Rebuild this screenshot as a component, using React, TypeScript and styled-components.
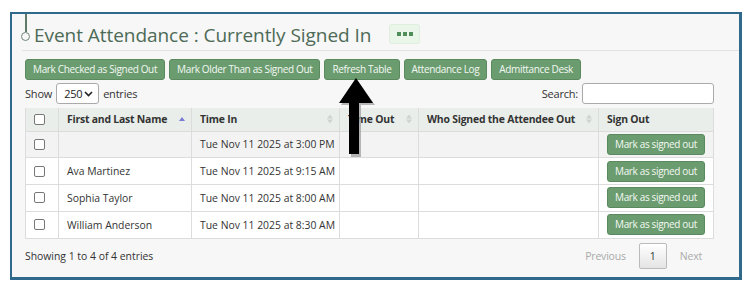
import React from 'react';
import styled, { createGlobalStyle } from 'styled-components';

const GlobalStyle = createGlobalStyle`
  body {
    margin: 0;
    background: #ffffff;
    font-family: "Open Sans", "Noto Sans", sans-serif;
  }
`;

const Page = styled.div`
  position: relative;
  width: 748px;
  height: 287px;
  padding: 12px 0 0 10px;
  box-sizing: border-box;
`;

const Panel = styled.div`
  position: relative;
  width: 732px;
  height: 268px;
  box-sizing: border-box;
  background: #f7f7f7;
  border: 2px solid #2f6a8c;
  border-right-width: 3px;
  border-bottom-width: 3px;
  padding: 0 25px 0 13px;
`;

const Header = styled.div`
  position: relative;
  display: flex;
  align-items: center;
  height: 36px;
  margin: 0 -25px 0 -3px;
  padding: 0 0 0 3px;
  border-bottom: 1px solid #e2e2e2;

  &::before {
    content: '';
    position: absolute;
    left: 3px;
    top: 0;
    width: 1.5px;
    height: 18px;
    background: #5f7a68;
  }
`;

const Node = styled.span`
  width: 7px;
  height: 7px;
  margin-left: -4px;
  margin-top: 8px;
  border: 1.5px solid #6f8576;
  border-radius: 50%;
  background: #f7f7f7;
  flex: none;
`;

const Title = styled.h1`
  margin: 6px 0 0 4px;
  font-family: "Open Sans", sans-serif;
  font-size: 19px;
  font-weight: 400;
  color: #4d6a56;
  letter-spacing: -0.05px;
  white-space: nowrap;
`;

const MoreButton = styled.button`
  margin: 4px 0 0 18px;
  width: 31px;
  height: 20px;
  padding: 0;
  display: flex;
  align-items: center;
  justify-content: center;
  gap: 2px;
  background: #eaf6ea;
  border: 1px solid #ddeedd;
  border-radius: 3px;
`;

const Dot = styled.span`
  width: 4px;
  height: 4px;
  background: #4f8d5b;
`;

const Toolbar = styled.div`
  display: flex;
  gap: 4px;
  margin-top: 8px;
`;

const GreenButton = styled.button`
  height: 21px;
  padding: 0 7px;
  background: #6b9c6f;
  color: #f4f8f4;
  border: 1px solid #5a8a5e;
  border-radius: 3px;
  font-family: "Open Sans", sans-serif;
  font-size: 10px;
  letter-spacing: -0.35px;
  line-height: 19px;
  white-space: nowrap;
  cursor: pointer;
`;

const Controls = styled.div`
  display: flex;
  justify-content: space-between;
  align-items: center;
  margin-top: 3px;
  height: 21px;
  font-size: 11px;
  letter-spacing: -0.2px;
  color: #333;
`;

const Label = styled.label`
  display: flex;
  align-items: center;
  gap: 4px;
`;

const SelectBox = styled.span`
  display: inline-flex;
  align-items: center;
  justify-content: space-between;
  box-sizing: border-box;
  width: 43px;
  height: 21px;
  padding: 0 5px 0 7px;
  background: #fff;
  border: 1px solid #aaa;
  border-radius: 3px;
  color: #222;
`;

const SearchInput = styled.input`
  box-sizing: border-box;
  width: 132px;
  height: 21px;
  border: 1px solid #aaa;
  border-radius: 3px;
  background: #fff;
`;

const Table = styled.table`
  width: 688px;
  margin-top: 4px;
  table-layout: fixed;
  border-collapse: collapse;
  font-family: "Open Sans", sans-serif;
  font-size: 10.4px;
  color: #333;
  background: #fff;
  white-space: nowrap;
`;

const Th = styled.th<{ $w: number }>`
  position: relative;
  box-sizing: border-box;
  width: ${(p) => p.$w}px;
  height: 23px;
  padding: 0 8px;
  text-align: left;
  font-weight: 700;
  letter-spacing: -0.2px;
  background: #e9eeea;
  border: 1px solid #dcdcdc;
  border-top: none;
  overflow: hidden;
`;

const Td = styled.td`
  height: 25.8px;
  padding: 0 8px;
  border: 1px solid #dcdcdc;
`;

const Row = styled.tr<{ $shade: boolean }>`
  background: ${(p) => (p.$shade ? '#f3f3f3' : '#ffffff')};
`;

const Box = styled.span`
  display: block;
  width: 9px;
  height: 9px;
  border: 1px solid #777;
  border-radius: 2px;
  background: #fff;
`;

const SortIcon = styled.span<{ $active?: boolean }>`
  position: absolute;
  right: 6px;
  top: 50%;
  transform: translateY(-50%);
  display: flex;
  flex-direction: column;
  gap: 1px;
  opacity: ${(p) => (p.$active ? 1 : 0.3)};
`;

const Tri = styled.span<{ $down?: boolean; $color: string }>`
  width: 0;
  height: 0;
  border-left: 3px solid transparent;
  border-right: 3px solid transparent;
  ${(p) =>
    p.$down
      ? `border-top: 4px solid ${p.$color};`
      : `border-bottom: 4px solid ${p.$color};`}
`;

const RowButton = styled(GreenButton)`
  padding: 0 7px;
`;

const Footer = styled.div`
  display: flex;
  justify-content: space-between;
  align-items: center;
  margin-top: 4px;
  font-family: "Open Sans", sans-serif;
  font-size: 10.4px;
  color: #333;
`;

const Pager = styled.div`
  display: flex;
  align-items: center;
  gap: 13px;
  margin-right: 12px;
  font-family: "Open Sans", sans-serif;
  font-size: 10.5px;
  letter-spacing: -0.2px;
  color: #aaa;
`;

const PageBox = styled.span`
  display: flex;
  align-items: center;
  justify-content: center;
  width: 28px;
  height: 26px;
  box-sizing: border-box;
  border: 1px solid #bbb;
  border-radius: 2px;
  background: linear-gradient(#ffffff, #e4e4e4);
  color: #333;
`;

const Arrow = styled.svg`
  position: absolute;
  left: 338px;
  top: 77px;
`;

function SortMark({ active }: { active?: boolean }) {
  if (active) {
    return (
      <SortIcon $active>
        <Tri $color="#7b7bd6" />
      </SortIcon>
    );
  }
  return (
    <SortIcon>
      <Tri $color="#999" />
      <Tri $down $color="#999" />
    </SortIcon>
  );
}

const rows = [
  { name: '', time: 'Tue Nov 11 2025 at 3:00 PM' },
  { name: 'Ava Martinez', time: 'Tue Nov 11 2025 at 9:15 AM' },
  { name: 'Sophia Taylor', time: 'Tue Nov 11 2025 at 8:00 AM' },
  { name: 'William Anderson', time: 'Tue Nov 11 2025 at 8:30 AM' },
];

export default function App() {
  return (
    <>
      <GlobalStyle />
      <Page>
        <Panel>
          <Header>
            <Node />
            <Title>Event Attendance : Currently Signed In</Title>
            <MoreButton aria-label="more">
              <Dot />
              <Dot />
              <Dot />
            </MoreButton>
          </Header>
          <Toolbar>
            <GreenButton>Mark Checked as Signed Out</GreenButton>
            <GreenButton>Mark Older Than as Signed Out</GreenButton>
            <GreenButton>Refresh Table</GreenButton>
            <GreenButton>Attendance Log</GreenButton>
            <GreenButton>Admittance Desk</GreenButton>
          </Toolbar>
          <Controls>
            <Label>
              Show
              <SelectBox>
                250
                <svg width="9" height="6" viewBox="0 0 9 6">
                  <path d="M1 1l3.5 3.5L8 1" fill="none" stroke="#222" strokeWidth="1.6" />
                </svg>
              </SelectBox>
              entries
            </Label>
            <Label>
              Search:
              <SearchInput />
            </Label>
          </Controls>
          <Table>
            <thead>
              <tr>
                <Th $w={33}>
                  <Box />
                </Th>
                <Th $w={133}>
                  First and Last Name
                  <SortMark active />
                </Th>
                <Th $w={148}>
                  Time In
                  <SortMark />
                </Th>
                <Th $w={79}>
                  Time Out
                  <SortMark />
                </Th>
                <Th $w={180}>
                  Who Signed the Attendee Out
                  <SortMark />
                </Th>
                <Th $w={115}>Sign Out</Th>
              </tr>
            </thead>
            <tbody>
              {rows.map((r, i) => (
                <Row key={i} $shade={i === 0}>
                  <Td>
                    <Box />
                  </Td>
                  <Td>{r.name}</Td>
                  <Td>{r.time}</Td>
                  <Td />
                  <Td />
                  <Td>
                    <RowButton>Mark as signed out</RowButton>
                  </Td>
                </Row>
              ))}
            </tbody>
          </Table>
          <Footer>
            <span>Showing 1 to 4 of 4 entries</span>
            <Pager>
              <span>Previous</span>
              <PageBox>1</PageBox>
              <span>Next</span>
            </Pager>
          </Footer>
        </Panel>
        <Arrow width="44" height="82" viewBox="0 0 44 82">
          <path d="M20 4 L37 28 L23 28 L23 80 L13 80 L13 28 L3 28 Z" fill="#9a9a9a" opacity="0.7" />
          <path d="M18 1 L35 26 L21 26 L21 77 L11 77 L11 26 L1 26 Z" fill="#000" />
        </Arrow>
      </Page>
    </>
  );
}
